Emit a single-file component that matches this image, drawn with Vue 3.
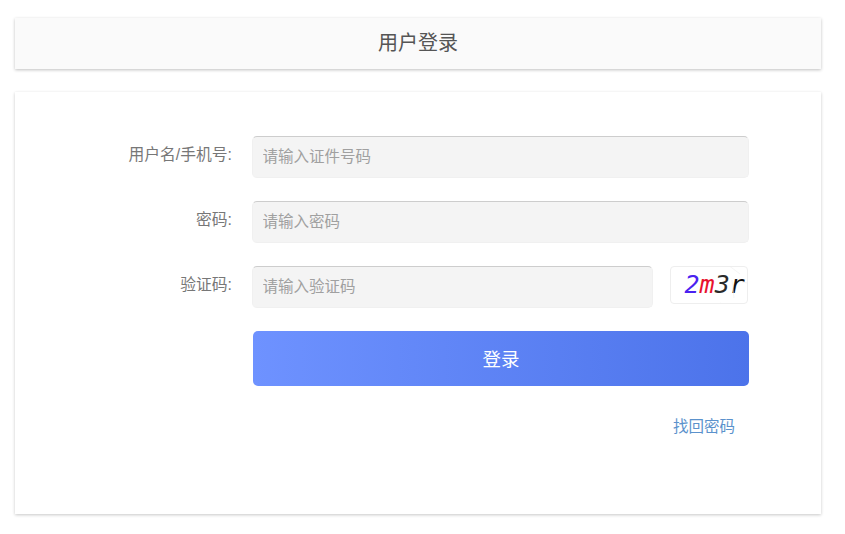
<script setup>
const fields = [
  { label: '用户名/手机号:', placeholder: '请输入证件号码' },
  { label: '密码:', placeholder: '请输入密码' },
]
</script>

<template>
  <div class="page">
    <header class="head">用户登录</header>
    <main class="card">
      <div v-for="f in fields" :key="f.label" class="row">
        <label class="label">{{ f.label }}</label>
        <input class="input" type="text" :placeholder="f.placeholder" />
      </div>
      <div class="row">
        <label class="label">验证码:</label>
        <input class="input code" type="text" placeholder="请输入验证码" />
        <div class="captcha">
          <svg class="noise" width="78" height="38" viewBox="0 0 78 38">
            <path d="M58 -1 L70 8 M50 37 L55 39 M62 14 L64 32 M72 16 L78 17" stroke="#eee" stroke-width="0.6" fill="none" />
          </svg>
          <span class="c1">2</span><span class="c2">m</span><span class="c3">3</span><span class="c4">r</span>
        </div>
      </div>
      <button class="submit" type="button">登录</button>
      <a class="link">找回密码</a>
    </main>
  </div>
</template>

<style scoped>
.page {
  width: 845px;
  height: 534px;
  box-sizing: border-box;
  padding: 18px 24px 0 15px;
  background: #fff;
  font-family: "Liberation Sans", "Noto Sans CJK SC", sans-serif;
}
.head {
  height: 51px;
  line-height: 51px;
  text-align: center;
  font-size: 20px;
  color: #555;
  background: #fafafa;
  box-shadow: 0 1px 3px rgba(0, 0, 0, 0.25);
}
.card {
  height: 422px;
  margin-top: 23px;
  box-sizing: border-box;
  padding-top: 44px;
  display: flex;
  flex-direction: column;
  background: #fff;
  box-shadow: 0 1px 3px rgba(0, 0, 0, 0.22);
}
.row {
  display: flex;
  align-items: flex-start;
  height: 42px;
  margin-bottom: 23px;
}
.label {
  width: 217px;
  margin-right: 20px;
  text-align: right;
  font-size: 15.8px;
  line-height: 38px;
  color: #777;
  flex: none;
}
.input {
  width: 497px;
  height: 42px;
  box-sizing: border-box;
  padding: 0 10px;
  margin-left: -0.5px;
  border: 1px solid #f0f0f0;
  border-top-color: #cdcdcd;
  border-radius: 5px;
  background: #f4f4f4;
  font: 15.5px "Liberation Sans", "Noto Sans CJK SC", sans-serif;
  outline: none;
}
.input::placeholder {
  color: #a0a0a0;
  opacity: 1;
}
.code {
  width: 401px;
}
.captcha {
  position: relative;
  width: 78px;
  height: 38px;
  margin-left: 17px;
  box-sizing: border-box;
  border: 1px solid #eee;
  border-radius: 4px;
  padding-left: 14px;
  font: italic 25px/35px "DejaVu Sans Mono", monospace;
  white-space: nowrap;
}
.noise {
  position: absolute;
  left: -1px;
  top: -1px;
}
.c1 { color: #4a22f0; }
.c2 { color: #e8112d; }
.c3 { color: #2a2a2a; }
.c4 { color: #111; }
.submit {
  width: 496px;
  height: 55px;
  margin: 0 0 0 238px;
  padding: 0 0 2px;
  border: none;
  border-radius: 5px;
  color: #fff;
  font: 18.5px "Liberation Sans", "Noto Sans CJK SC", sans-serif;
  background: linear-gradient(90deg, #6e92ff, #4c73ea);
}
.link {
  align-self: flex-end;
  margin: 31px 86px 0 0;
  font-size: 15.5px;
  line-height: 20px;
  color: #5b92cc;
}
</style>
